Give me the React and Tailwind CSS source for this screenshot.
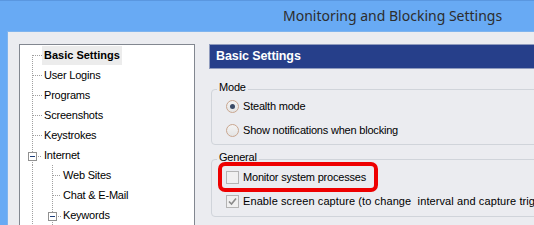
import React from 'react';

const treeItems = [
  { label: 'Basic Settings', level: 0, first: true, selected: true },
  { label: 'User Logins', level: 0 },
  { label: 'Programs', level: 0 },
  { label: 'Screenshots', level: 0 },
  { label: 'Keystrokes', level: 0 },
  { label: 'Internet', level: 0, expander: true },
  { label: 'Web Sites', level: 1 },
  { label: 'Chat & E-Mail', level: 1 },
  { label: 'Keywords', level: 1, expander: true },
];

const dot = { stroke: '#a0a0a0', strokeWidth: 1, strokeDasharray: '1 1', shapeRendering: 'crispEdges' };

// minus box used on expandable nodes
const Expander = ({ x }) => (
  <g shapeRendering="crispEdges">
    <rect x={x + 0.5} y={7.5} width={8} height={8} fill="#fff" stroke="#919191" />
    <line x1={x + 2} y1={11.5} x2={x + 7} y2={11.5} stroke="#1d3f7a" />
  </g>
);

const TreeLines = ({ item }) => {
  if (item.level === 0) {
    return (
      <svg width="22" height="20" className="shrink-0">
        {item.expander ? (
          <>
            <line x1="12.5" y1="0" x2="12.5" y2="7" {...dot} />
            <line x1="12.5" y1="17" x2="12.5" y2="20" {...dot} />
            <Expander x={8} />
            <line x1="18" y1="11.5" x2="22" y2="11.5" {...dot} />
          </>
        ) : (
          <>
            <line x1="12.5" y1={item.first ? 10 : 0} x2="12.5" y2="20" {...dot} />
            <line x1="13" y1="10.5" x2="22" y2="10.5" {...dot} />
          </>
        )}
      </svg>
    );
  }
  return (
    <svg width="41" height="20" className="shrink-0">
      <line x1="12.5" y1="0" x2="12.5" y2="20" {...dot} />
      {item.expander ? (
        <>
          <line x1="32.5" y1="0" x2="32.5" y2="7" {...dot} />
          <line x1="32.5" y1="17" x2="32.5" y2="20" {...dot} />
          <Expander x={28} />
          <line x1="38" y1="11.5" x2="41" y2="11.5" {...dot} />
        </>
      ) : (
        <>
          <line x1="32.5" y1="0" x2="32.5" y2="20" {...dot} />
          <line x1="33" y1="10.5" x2="41" y2="10.5" {...dot} />
        </>
      )}
    </svg>
  );
};

const Radio = ({ checked }) => (
  <span className="w-[13px] h-[13px] rounded-full border border-[#c9a68f] bg-gradient-to-b from-[#f4f4f4] to-[#e4e4e4] flex items-center justify-center shrink-0">
    {checked && <span className="w-[5px] h-[5px] rounded-full bg-[#3a4a66]" />}
  </span>
);

const Checkbox = ({ checked }) => (
  <span className="w-[13px] h-[13px] border border-[#b4b4b4] bg-[#f0f0f0] flex items-center justify-center shrink-0">
    {checked && (
      <svg width="9" height="9" viewBox="0 0 9 9">
        <path d="M1 4.5 L3.5 7 L8 1.5" fill="none" stroke="#8a8a8a" strokeWidth="1.6" />
      </svg>
    )}
  </span>
);

const GroupBox = ({ title, className, children }) => (
  <div className={`ml-[2px] -mr-[20px] border border-[#d0d4da] rounded-[4px] pl-[14px] flex flex-col ${className}`}>
    <span className="-mt-[10px] -ml-[9px] w-fit px-[2px] bg-[#ebecf0] leading-[14px]">{title}</span>
    {children}
  </div>
);

export default function App() {
  return (
    <div
      className="w-[534px] h-[225px] overflow-hidden bg-[#68aaf4] border-t border-[#5a97e0] flex flex-col"
      style={{ fontFamily: '"Liberation Sans", Arial, sans-serif' }}
    >
      <div className="h-[30px] shrink-0 flex items-center pl-[283px] pb-[1px]">
        <span className="text-[14px] text-[#2d2d2d]" style={{ fontFamily: '"Noto Sans", "Open Sans", sans-serif' }}>
          Monitoring and Blocking Settings
        </span>
      </div>

      <div className="flex-1 ml-[7px] bg-[#ebecf0] border-l border-t border-[#7fb4ee] flex items-start pl-[11px] pt-[12px] gap-[14px] text-[11px] tracking-[-0.2px] text-black">
        {/* tree */}
        <div className="w-[176px] h-[200px] shrink-0 bg-white border border-[#828790] flex flex-col">
          {treeItems.map((item) => (
            <div key={item.label} className="h-[20px] flex items-center">
              <TreeLines item={item} />
              <span
                className={
                  item.selected
                    ? 'h-[19px] px-[2px] flex items-center font-bold tracking-normal bg-[#ececec]'
                    : 'px-[2px]'
                }
              >
                {item.label}
              </span>
            </div>
          ))}
        </div>

        {/* right side */}
        <div className="flex-1 flex flex-col min-w-0">
          <div className="h-[25px] bg-[#263f8a] border border-[#8f9bbd] border-r-0 flex items-center pl-[6px]">
            <span className="text-white font-bold text-[12.5px] tracking-[-0.1px]">Basic Settings</span>
          </div>

          <GroupBox title="Mode" className="mt-[20px] pb-[4px]">
            <div className="mt-[2px] h-[20px] flex items-center gap-[4px]">
              <Radio checked />
              <span>Stealth mode</span>
            </div>
            <div className="mt-[4px] h-[20px] flex items-center gap-[4px]">
              <Radio />
              <span>Show notifications when blocking</span>
            </div>
          </GroupBox>

          <GroupBox title="General" className="mt-[14px] pb-[5px]">
            <div className="relative mt-[3px] h-[20px] flex items-center gap-[4px]">
              <span className="absolute left-[-8px] top-[-5px] w-[160px] h-[30px] border-[4px] border-[#ee0000] rounded-[7px]" />
              <Checkbox />
              <span>Monitor system processes</span>
            </div>
            <div className="mt-[4px] h-[20px] flex items-center gap-[4px] whitespace-nowrap">
              <Checkbox checked />
              <span className="tracking-[0.1px]">Enable screen capture (to change&nbsp; interval and capture triggers, see Screenshots)</span>
            </div>
          </GroupBox>
        </div>
      </div>
    </div>
  );
}
